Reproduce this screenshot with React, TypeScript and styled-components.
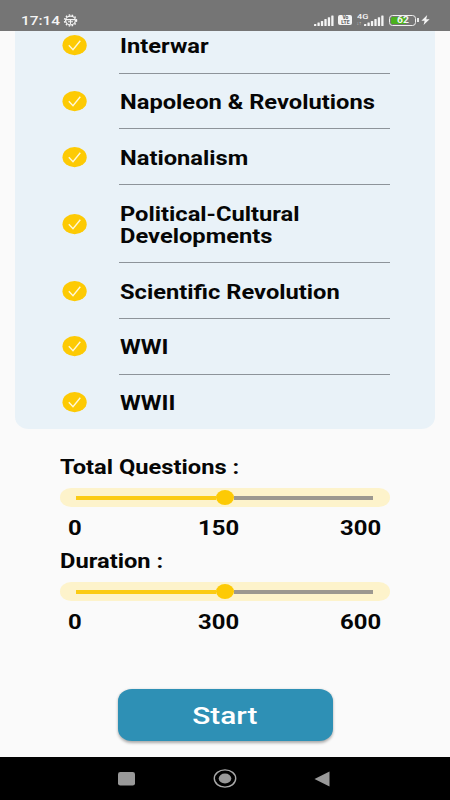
import React from "react";
import styled, { createGlobalStyle } from "styled-components";

const GlobalStyle = createGlobalStyle`
  * { box-sizing: border-box; }
  body { margin: 0; background: #fafafa; font-family: Roboto, "Liberation Sans", sans-serif; }
`;

const Screen = styled.div`
  width: 450px;
  height: 800px;
  display: flex;
  flex-direction: column;
  overflow: hidden;
  background: #fafafa;
  color: #060606;
`;

const StatusBar = styled.header`
  height: 31px;
  flex: none;
  display: flex;
  justify-content: space-between;
  padding: 10px 20px 0 21px;
  background: #757575;
  color: #f4f4f4;
`;

const StatusGroup = styled.div`
  display: flex;
  align-items: center;
  height: 20px;
`;

/* The whole interface is set in a wide cut: glyphs keep their height and grow sideways. */
const Wide = styled.span<{ $scale?: number; $origin?: string }>`
  display: inline-block;
  white-space: nowrap;
  transform: scaleX(${(p) => p.$scale ?? 1.215});
  transform-origin: ${(p) => p.$origin ?? "left"} center;
`;

const Clock = styled.div`
  width: 42px;
  padding-top: 1px;
  font-size: 13px;
  line-height: 20px;
  font-weight: 500;
`;

const Main = styled.main`
  height: 726px;
  flex: none;
  display: flex;
  flex-direction: column;
  overflow: hidden;
`;

const TopicCard = styled.section`
  height: 398px;
  flex: none;
  margin: 0 15px;
  overflow: hidden;
  background: #e9f2f8;
  border-radius: 0 0 14px 14px / 0 0 12px 12px;
`;

const TopicList = styled.ul`
  margin: -13.1px 0 0;
  padding: 0 45px 0 47px;
  list-style: none;
`;

const TopicRow = styled.li<{ $tall?: boolean }>`
  display: flex;
  align-items: center;
  gap: 32px;
  height: ${(p) => (p.$tall ? 78.2 : 55.7)}px;
`;

const TopicLabel = styled.div<{ $last?: boolean }>`
  flex: 1;
  align-self: stretch;
  display: flex;
  flex-direction: column;
  justify-content: center;
  padding: 4.2px 0 0 0.6px;
  border-bottom: 1px solid ${(p) => (p.$last ? "transparent" : "#8d949a")};
  font-size: 19.5px;
  line-height: 22px;
  font-weight: 700;
`;

const Settings = styled.section`
  flex: none;
  padding: 27px 60px 0;
`;

const Setting = styled.div`
  height: 94px;
`;

const SettingTitle = styled.div`
  height: 22px;
  margin-left: -0.5px;
  padding-top: 1px;
  font-size: 19.5px;
  line-height: 22px;
  font-weight: 700;
`;

const Track = styled.div`
  height: 19px;
  margin-top: 10px;
  padding: 0 17px 0 16px;
  display: flex;
  align-items: center;
  border-radius: 11px / 9.5px;
  background: #fdf3cb;
`;

const Segment = styled.div<{ $on?: boolean }>`
  flex: 1;
  height: 4px;
  background: ${(p) => (p.$on ? "#fbcb14" : "#9c9890")};
`;

const Thumb = styled.div`
  width: 18px;
  height: 15px;
  border-radius: 50%;
  background: #fdca04;
`;

const Scale = styled.div`
  display: flex;
  justify-content: space-between;
  margin-top: 11px;
  padding: 0 8px;
  font-size: 19.5px;
  line-height: 22px;
  font-weight: 700;
`;

/* The single-digit first cell is narrow, so the middle value is nudged towards the thumb. */
const ScaleValue = styled.div<{ $width: number }>`
  width: ${(p) => p.$width}px;

  &:nth-child(2) {
    margin-left: 15px;
  }
`;

const StartButton = styled.button`
  flex: none;
  width: 215px;
  height: 52px;
  margin: 44.6px 0 0 117.5px;
  padding: 2px 0 0;
  border: 0;
  border-radius: 14px / 12px;
  background: #2e90b5;
  box-shadow: 0 1.5px 3px rgba(0, 0, 0, 0.32);
  color: #fff;
  font: 500 24.5px/28px Roboto, sans-serif;
`;

const NavBar = styled.nav`
  flex: 1;
  display: flex;
  align-items: center;
  justify-content: space-between;
  padding: 0 120px 0 118px;
  background: #000;
`;

function Check() {
  return (
    <svg width="25" height="21" viewBox="0 0 25 21">
      <ellipse cx="12.6" cy="10.2" rx="12.1" ry="10.1" fill="#fdca04" />
      <path d="M6.8 10.3 L11 14.7 L18.3 5.7" fill="none" stroke="#fff8d8" strokeWidth="1.4" />
    </svg>
  );
}

function Gear() {
  return (
    <svg width="15" height="13" viewBox="0 0 15 13" fill="none" stroke="#f4f4f4">
      <ellipse cx="7.5" cy="6.5" rx="4.9" ry="4.3" strokeWidth="1.3" />
      <ellipse cx="7.5" cy="6.5" rx="6.1" ry="5.5" strokeWidth="1.3" strokeDasharray="1.5 1.6" />
      <path d="M3 5.6h9M7.5 6v4M5 7.8h5" strokeWidth="1.1" />
    </svg>
  );
}

function Signal() {
  const bars = [2, 3.5, 5, 7, 8.7, 10.5];
  return (
    <svg width="20" height="11" viewBox="0 0 20 11" fill="#f4f4f4">
      {bars.map((h, i) => (
        <rect key={h} x={i * 3.45} y={11 - h} width="2.3" height={h} rx="0.5" />
      ))}
    </svg>
  );
}

const VolteBadge = styled.div`
  width: 14px;
  height: 10.5px;
  margin: 0 4px 0 4px;
  padding-top: 0.5px;
  border-radius: 2px;
  background: #f4f4f4;
  color: #666;
  font-size: 5px;
  line-height: 4.8px;
  font-weight: 900;
  text-align: center;
`;

const Network = styled.div`
  width: 7px;
  height: 14px;
  margin: 0 0 0 1px;
  font-size: 7.5px;
  line-height: 7px;
  font-weight: 500;
`;

const Arrows = styled.div`
  margin-left: -1px;
  font-size: 5px;
  line-height: 6px;
  color: #ccc;
  white-space: nowrap;
`;

const Battery = styled.div`
  width: 27px;
  height: 11px;
  margin-left: 5px;
  padding: 1px;
  border: 1.2px solid #f0f0f0;
  border-radius: 3.5px;
`;

const Charge = styled.div`
  height: 7px;
  border-radius: 1.5px;
  background: linear-gradient(90deg, #4bb01c 66%, #757575 66%);
  font-size: 8.5px;
  line-height: 7.5px;
  font-weight: 700;
  text-align: center;
`;

const BatteryTip = styled.div`
  width: 1.6px;
  height: 4px;
  margin: 0 2px 0 1px;
  background: #e8e8e8;
`;

function Bolt() {
  return (
    <svg width="9" height="10" viewBox="0 0 9 10">
      <path d="M6.2 0 L0.4 5.7 H3.6 L2.6 10 L8.6 4.2 H5.2 Z" fill="#f4f4f4" />
    </svg>
  );
}

const topics: string[][] = [
  ["Interwar"],
  ["Napoleon & Revolutions"],
  ["Nationalism"],
  ["Political-Cultural", "Developments"],
  ["Scientific Revolution"],
  ["WWI"],
  ["WWII"],
];

function RangeSetting({ title, values }: { title: string; values: string[] }) {
  return (
    <Setting>
      <SettingTitle><Wide>{title}</Wide></SettingTitle>
      <Track>
        <Segment $on />
        <Thumb />
        <Segment />
      </Track>
      <Scale>
        {values.map((v) => (
          <ScaleValue key={v} $width={v.length * 13.9}>
            <Wide $scale={1.225}>{v}</Wide>
          </ScaleValue>
        ))}
      </Scale>
    </Setting>
  );
}

export default function App() {
  return (
    <Screen>
      <GlobalStyle />
      <StatusBar>
        <StatusGroup>
          <Clock><Wide $scale={1.185}>17:14</Wide></Clock>
          <Gear />
        </StatusGroup>
        <StatusGroup>
          <Signal />
          <VolteBadge>Vo<br />LTE</VolteBadge>
          <Network>
            <Wide>4G</Wide>
            <Arrows>↓↑</Arrows>
          </Network>
          <Signal />
          <Battery><Charge><Wide $origin="center">62</Wide></Charge></Battery>
          <BatteryTip />
          <Bolt />
        </StatusGroup>
      </StatusBar>
      <Main>
        <TopicCard>
          <TopicList>
            {topics.map((lines, i) => (
              <TopicRow key={lines[0]} $tall={lines.length > 1}>
                <Check />
                <TopicLabel $last={i === topics.length - 1}>
                  {lines.map((line) => (
                    <div key={line}><Wide>{line}</Wide></div>
                  ))}
                </TopicLabel>
              </TopicRow>
            ))}
          </TopicList>
        </TopicCard>
        <Settings>
          <RangeSetting title="Total Questions :" values={["0", "150", "300"]} />
          <RangeSetting title="Duration :" values={["0", "300", "600"]} />
        </Settings>
        <StartButton><Wide $origin="center">Start</Wide></StartButton>
      </Main>
      <NavBar>
        <svg width="17" height="14" viewBox="0 0 17 14"><rect width="17" height="13.5" rx="2.3" fill="#999" /></svg>
        <svg width="24" height="19" viewBox="0 0 24 19">
          <ellipse cx="12" cy="9.5" rx="10.7" ry="8.6" fill="none" stroke="#aaa" strokeWidth="1.4" />
          <ellipse cx="12" cy="9.5" rx="6.3" ry="5.1" fill="#999" />
        </svg>
        <svg width="16" height="16" viewBox="0 0 16 16"><path d="M0.5 8 L15.5 0.5 V15.5 Z" fill="#999" /></svg>
      </NavBar>
    </Screen>
  );
}
